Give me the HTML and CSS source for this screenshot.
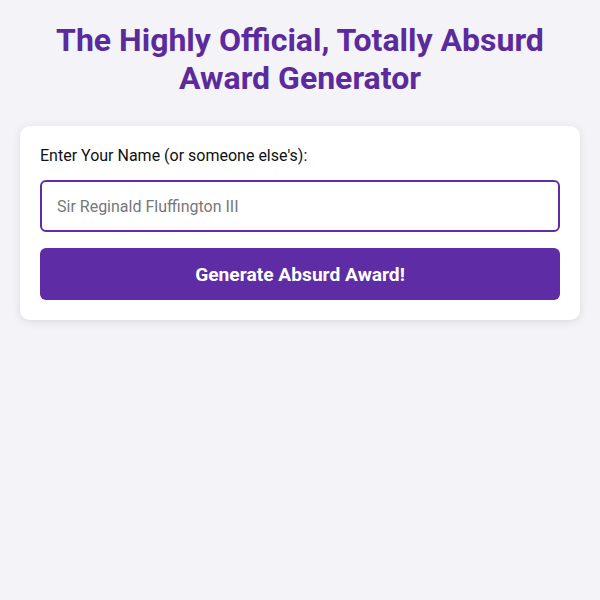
FILE: index.html
```html
<!DOCTYPE html>
<html lang="en">
<head>
<meta charset="utf-8">
<title>Absurd Award Generator</title>
<link rel="stylesheet" href="styles.css">
</head>
<body>
<h1 class="title">The Highly Official, Totally Absurd Award Generator</h1>
<div class="card">
  <label class="label" for="name">Enter Your Name (or someone else's):</label>
  <input class="input" id="name" type="text" placeholder="Sir Reginald Fluffington III">
  <button class="btn" type="button">Generate Absurd Award!</button>
</div>
</body>
</html>
```
FILE: styles.css
```css
html, body {
  margin: 0;
  background: #f4f3f8;
}
body {
  padding: 21px 20px;
  font-family: Roboto, "Liberation Sans", sans-serif;
  color: #111;
}
.title {
  margin: 0 0 29px;
  text-align: center;
  font-size: 32px;
  line-height: 38px;
  font-weight: 700;
  color: #5b2a9c;
  padding: 0 20px;
}
.card {
  background: #fff;
  border-radius: 10px;
  padding: 20px;
  box-shadow: 0 2px 10px rgba(0,0,0,0.1);
  display: flex;
  flex-direction: column;
}
.label {
  display: block;
  font-size: 16px;
  line-height: 19px;
  margin-bottom: 15px;
  color: #111;
}
.input {
  box-sizing: border-box;
  height: 52px;
  width: 100%;
  border: 2px solid #5e2ca5;
  border-radius: 6px;
  padding: 0 15px;
  font-family: Roboto, "Liberation Sans", sans-serif;
  font-size: 16px;
  outline: none;
  margin: 0 0 16px;
}
.input::placeholder {
  color: #777;
}
.btn {
  height: 52px;
  width: 100%;
  border: none;
  border-radius: 6px;
  background: #5e2ca5;
  color: #fff;
  font-family: Roboto, "Liberation Sans", sans-serif;
  font-size: 19.2px;
  font-weight: 700;
  cursor: pointer;
}
```
